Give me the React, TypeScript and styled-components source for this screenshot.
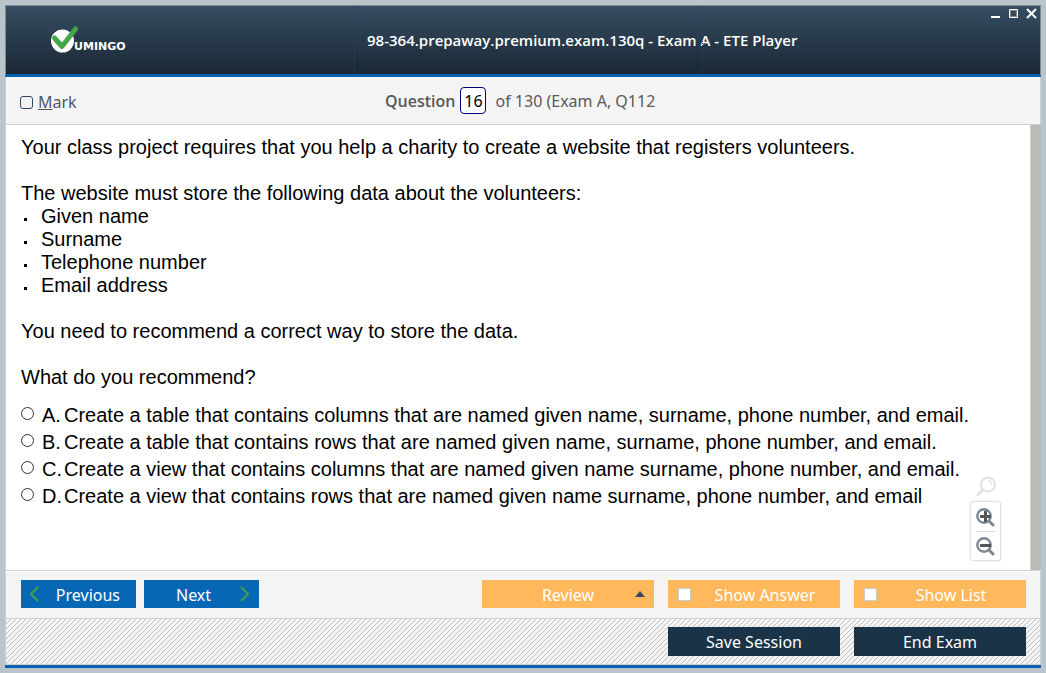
import React, { useState } from "react";
import styled, { createGlobalStyle } from "styled-components";

const ui = '"Noto Sans", "Open Sans", sans-serif';
const heading = '"Open Sans", "Noto Sans", sans-serif';
const body = '"Liberation Sans", Arial, sans-serif';

const GlobalStyle = createGlobalStyle`
  *, *::before, *::after { box-sizing: border-box; }
  body { margin: 0; background: #b9c5cb; }
  button, input { font: inherit; }
`;

const Desktop = styled.div`
  min-height: 100vh;
  padding: 5px;
  display: flex;
  flex-direction: column;
`;

const Player = styled.div`
  flex: 1;
  display: flex;
  flex-direction: column;
  border-bottom: 3px solid #0663b1;
  background: #f4f4f4;
`;

const TitleBar = styled.header`
  height: 72px;
  display: grid;
  grid-template-columns: 348fr 348fr 338fr;
  border: 1px solid #7f8c92;
  border-bottom: 3px solid #0060b0;
  background: linear-gradient(#364e63, #1a2733);
`;

const Cell = styled.div`
  display: flex;
  align-items: center;
  min-width: 0;
  & + & { border-left: 1px dotted #2b3a78; }
`;

const LogoCell = styled(Cell)`
  padding-left: 44px;
`;

const Title = styled.h1`
  margin: 0;
  padding-left: 12px;
  font: 600 15px/20px ${heading};
  color: #fff;
  white-space: nowrap;
`;

const WindowCell = styled(Cell)`
  align-items: flex-start;
  justify-content: flex-end;
  gap: 6px;
  padding: 2px;
`;

const WindowButton = styled.button`
  width: 12px;
  height: 12px;
  padding: 0;
  border: 0;
  background: none;
  svg { display: block; }
`;

const QuestionBar = styled.div`
  height: 48px;
  display: grid;
  grid-template-columns: 379px 1fr;
  align-items: center;
  border: 1px solid #cfcfcf;
  border-top: 0;
  font: 16px/24px ${ui};
  color: #595959;
`;

const Mark = styled.label`
  display: flex;
  align-items: center;
  gap: 5px;
  padding: 3px 0 0 14px;
  color: #4a5a68;
`;

const MarkBox = styled.input`
  appearance: none;
  width: 13px;
  height: 13px;
  margin: 0;
  border: 1px solid #34495e;
  border-radius: 3px;
  &:checked { background: #34495e; }
`;

const Position = styled.label`
  display: flex;
  align-items: center;
  white-space: nowrap;
`;

const PositionName = styled.span`
  font: 600 16px/24px ${heading};
`;

const NumberInput = styled.input`
  width: 26px;
  height: 27px;
  margin: 0 9px 0 5px;
  padding: 0;
  border: 1px solid #00007f;
  border-radius: 4px;
  background: #fff;
  color: #000;
  text-align: center;
`;

const Clip = styled.span`
  width: 161px;
  overflow: hidden;
`;

const Content = styled.main`
  flex: 1;
  display: flex;
  border: 1px solid #cfcfcf;
  border-top: 0;
  background: #fff;
`;

const Question = styled.div`
  flex: 1;
  padding: 11px 0 0 15px;
  font: 20px/23px ${body};
  color: #000;
`;

const Paragraph = styled.p`
  margin: 0 0 23px;
`;

const Lead = styled.p`
  margin: 0;
`;

const Bullets = styled.ul`
  margin: 0 0 23px;
  padding: 0;
  list-style: none;
`;

const Bullet = styled.li`
  display: flex;
  align-items: center;
  gap: 14px;
  padding-left: 3px;
  &::before {
    content: "";
    width: 3px;
    height: 3px;
    margin-top: 5px;
    background: #000;
  }
`;

const Options = styled.div`
  margin-top: -10px;
`;

const Option = styled.label`
  display: grid;
  grid-template-columns: 21px 22px 1fr;
  align-items: center;
  height: 27px;
  white-space: nowrap;
`;

const Radio = styled.input`
  appearance: none;
  width: 13px;
  height: 13px;
  margin: 0 0 4px;
  border: 1px solid #333;
  border-radius: 50%;
  background: #fff;
  &:checked { background: radial-gradient(#333 3px, #fff 4px); }
`;

const ZoomColumn = styled.div`
  align-self: flex-end;
  display: flex;
  flex-direction: column;
  align-items: center;
  gap: 4px;
  margin: 0 29px 9px 0;
`;

const ZoomPanel = styled.div`
  width: 31px;
  padding: 0 5px;
  border: 1px solid #e2e2e2;
  border-radius: 3px;
  box-shadow: 0 0 2px #ddd;
`;

const ZoomButton = styled.button`
  display: block;
  width: 100%;
  height: 29px;
  padding: 0;
  border: 0;
  background: none;
  & + & { border-top: 1px solid #ddd; }
  svg { display: block; }
`;

const ScrollTrack = styled.div`
  width: 11px;
  margin-right: -1px;
  border-left: 1px solid #d0d0cd;
  background: #bbbab6;
`;

const NavBar = styled.div`
  height: 48px;
  display: flex;
  align-items: flex-start;
  gap: 14px;
  padding: 8px 14px 0 15px;
  border: 1px solid #cfcfcf;
  border-top-color: #fff;
`;

const NavGroup = styled.div`
  flex: 1;
  display: flex;
  gap: 8px;
`;

const SessionBar = styled.div`
  height: 46px;
  display: flex;
  justify-content: flex-end;
  gap: 14px;
  padding: 8px 14px 0;
  border: 1px solid #cfcfcf;
  border-top: 0;
  background: linear-gradient(135deg, #f5f5f5 45%, #bdbdbd 45% 55%, #f5f5f5 55%) 0 0 / 5px 5px;
`;

const BaseButton = styled.button`
  display: flex;
  align-items: center;
  justify-content: center;
  height: 28px;
  padding: 0;
  border: 0;
  font: 16px/24px ${ui};
  color: #fff;
`;

const NavButton = styled(BaseButton)<{ $next?: boolean }>`
  width: 115px;
  justify-content: space-between;
  padding: ${(p) => (p.$next ? "0 9px 0 32px" : "0 16px 0 8px")};
  background: #0867b5;
`;

const ButtonText = styled.span`
  padding-top: 2px;
`;

const ReviewButton = styled(BaseButton)`
  width: 172px;
  background: #ffb85c;
  display: grid;
  grid-template-columns: 1fr 10px;
  padding: 0 9px;
  ${ButtonText} { padding-left: 10px; }
`;

const Toggle = styled.label`
  width: 172px;
  height: 28px;
  display: grid;
  grid-template-columns: 13px 1fr;
  align-items: center;
  padding: 0 1px 0 10px;
  background: #ffb85c;
  font: 16px/24px ${ui};
  color: #fff;
  text-align: center;
`;

const ToggleBox = styled.input`
  appearance: none;
  width: 13px;
  height: 13px;
  margin: 0;
  border: 1px solid #ccc;
  background: #fff;
  &:checked { background: #34495e; }
`;

const SessionButton = styled(BaseButton)`
  width: 172px;
  height: 29px;
  background: #1a3347;
`;

const Logo = () => (
  <svg width="86" height="30" viewBox="0 0 86 30" role="img" aria-label="Vumingo">
    <circle cx="12.5" cy="16" r="11.5" fill="#fff" />
    <path d="M4.500 13 L12 21.500 L25.500 4" fill="none" stroke="#45a648" strokeWidth="5" strokeLinecap="round" strokeLinejoin="round" />
    <text x="24" y="25" fill="#fff" fontFamily="DejaVu Sans" fontWeight="700" fontSize="11">UMINGO</text>
  </svg>
);

const Magnifier = ({ sign }: { sign: "plus" | "minus" }) => (
  <svg width="20" height="20" viewBox="0 0 20 20" fill="none" aria-hidden="true">
    <circle cx="8" cy="9" r="6.7" stroke="#7a8791" strokeWidth="2.4" />
    <path d="M13 14L17 18" stroke="#7a8791" strokeWidth="3" strokeLinecap="round" />
    <path d={sign === "plus" ? "M4 9.5H15M9.5 4V15" : "M4 9.5H15"} stroke="#555" strokeWidth="3" />
  </svg>
);

const options = [
  ["A.", "Create a table that contains columns that are named given name, surname, phone number, and email."],
  ["B.", "Create a table that contains rows that are named given name, surname, phone number, and email."],
  ["C.", "Create a view that contains columns that are named given name surname, phone number, and email."],
  ["D.", "Create a view that contains rows that are named given name surname, phone number, and email"],
];

export default function App() {
  const [number, setNumber] = useState("16");
  return (
    <Desktop>
      <GlobalStyle />
      <Player>
        <TitleBar>
          <LogoCell><Logo /></LogoCell>
          <Cell><Title>98-364.prepaway.premium.exam.130q - Exam A - ETE Player</Title></Cell>
          <WindowCell>
            <WindowButton aria-label="Minimize">
              <svg width="12" height="12"><path d="M1 8h9v2H1z" fill="#fff" /></svg>
            </WindowButton>
            <WindowButton aria-label="Maximize">
              <svg width="12" height="12" fill="none">
                <path d="M1.500 1.500h8v8h-8z" stroke="#fff" />
                <path d="M2.500 2.500h6v6h-6z" stroke="#8b8680" />
              </svg>
            </WindowButton>
            <WindowButton aria-label="Close">
              <svg width="12" height="12"><path d="M1 1l9 9M10 1l-9 9" stroke="#fff" strokeWidth="2" /></svg>
            </WindowButton>
          </WindowCell>
        </TitleBar>
        <QuestionBar>
          <Mark><MarkBox type="checkbox" /><span><u>M</u>ark</span></Mark>
          <Position>
            <PositionName>Question</PositionName>
            <NumberInput value={number} onChange={(e) => setNumber(e.target.value)} />
            <Clip>of 130 (Exam A, Q112)</Clip>
          </Position>
        </QuestionBar>
        <Content>
          <Question>
            <Paragraph>Your class project requires that you help a charity to create a website that registers volunteers.</Paragraph>
            <Lead>The website must store the following data about the volunteers:</Lead>
            <Bullets>
              <Bullet>Given name</Bullet>
              <Bullet>Surname</Bullet>
              <Bullet>Telephone number</Bullet>
              <Bullet>Email address</Bullet>
            </Bullets>
            <Paragraph>You need to recommend a correct way to store the data.</Paragraph>
            <Paragraph>What do you recommend?</Paragraph>
            <Options>
              {options.map(([letter, text]) => (
                <Option key={letter}>
                  <Radio type="radio" name="answer" value={letter} />
                  <span>{letter}</span>
                  <span>{text}</span>
                </Option>
              ))}
            </Options>
          </Question>
          <ZoomColumn>
            <svg width="22" height="22" viewBox="0 0 22 22" fill="none" stroke="#e0e0e0" aria-hidden="true">
              <circle cx="13" cy="9.500" r="7" strokeWidth="2" />
              <path d="M13 6a4 4 0 0 1 4 4" strokeWidth="1.500" />
              <path d="M7.500 15L3 19.500" strokeWidth="3" strokeLinecap="round" />
            </svg>
            <ZoomPanel>
              <ZoomButton aria-label="Zoom in"><Magnifier sign="plus" /></ZoomButton>
              <ZoomButton aria-label="Zoom out"><Magnifier sign="minus" /></ZoomButton>
            </ZoomPanel>
          </ZoomColumn>
          <ScrollTrack />
        </Content>
        <NavBar>
          <NavGroup>
            <NavButton>
              <svg width="10" height="16" fill="none" stroke="#43a047" strokeWidth="2" aria-hidden="true"><path d="M9 1L2 8l7 7" /></svg>
              <ButtonText>Previous</ButtonText>
            </NavButton>
            <NavButton $next>
              <ButtonText>Next</ButtonText>
              <svg width="10" height="16" fill="none" stroke="#43a047" strokeWidth="2" aria-hidden="true"><path d="M1 1l7 7-7 7" /></svg>
            </NavButton>
          </NavGroup>
          <ReviewButton>
            <ButtonText>Review</ButtonText>
            <svg width="10" height="6" aria-hidden="true"><path d="M0 6L5 0l5 6z" fill="#34495e" /></svg>
          </ReviewButton>
          <Toggle><ToggleBox type="checkbox" /><ButtonText>Show Answer</ButtonText></Toggle>
          <Toggle><ToggleBox type="checkbox" /><ButtonText>Show List</ButtonText></Toggle>
        </NavBar>
        <SessionBar>
          <SessionButton>Save Session</SessionButton>
          <SessionButton>End Exam</SessionButton>
        </SessionBar>
      </Player>
    </Desktop>
  );
}
